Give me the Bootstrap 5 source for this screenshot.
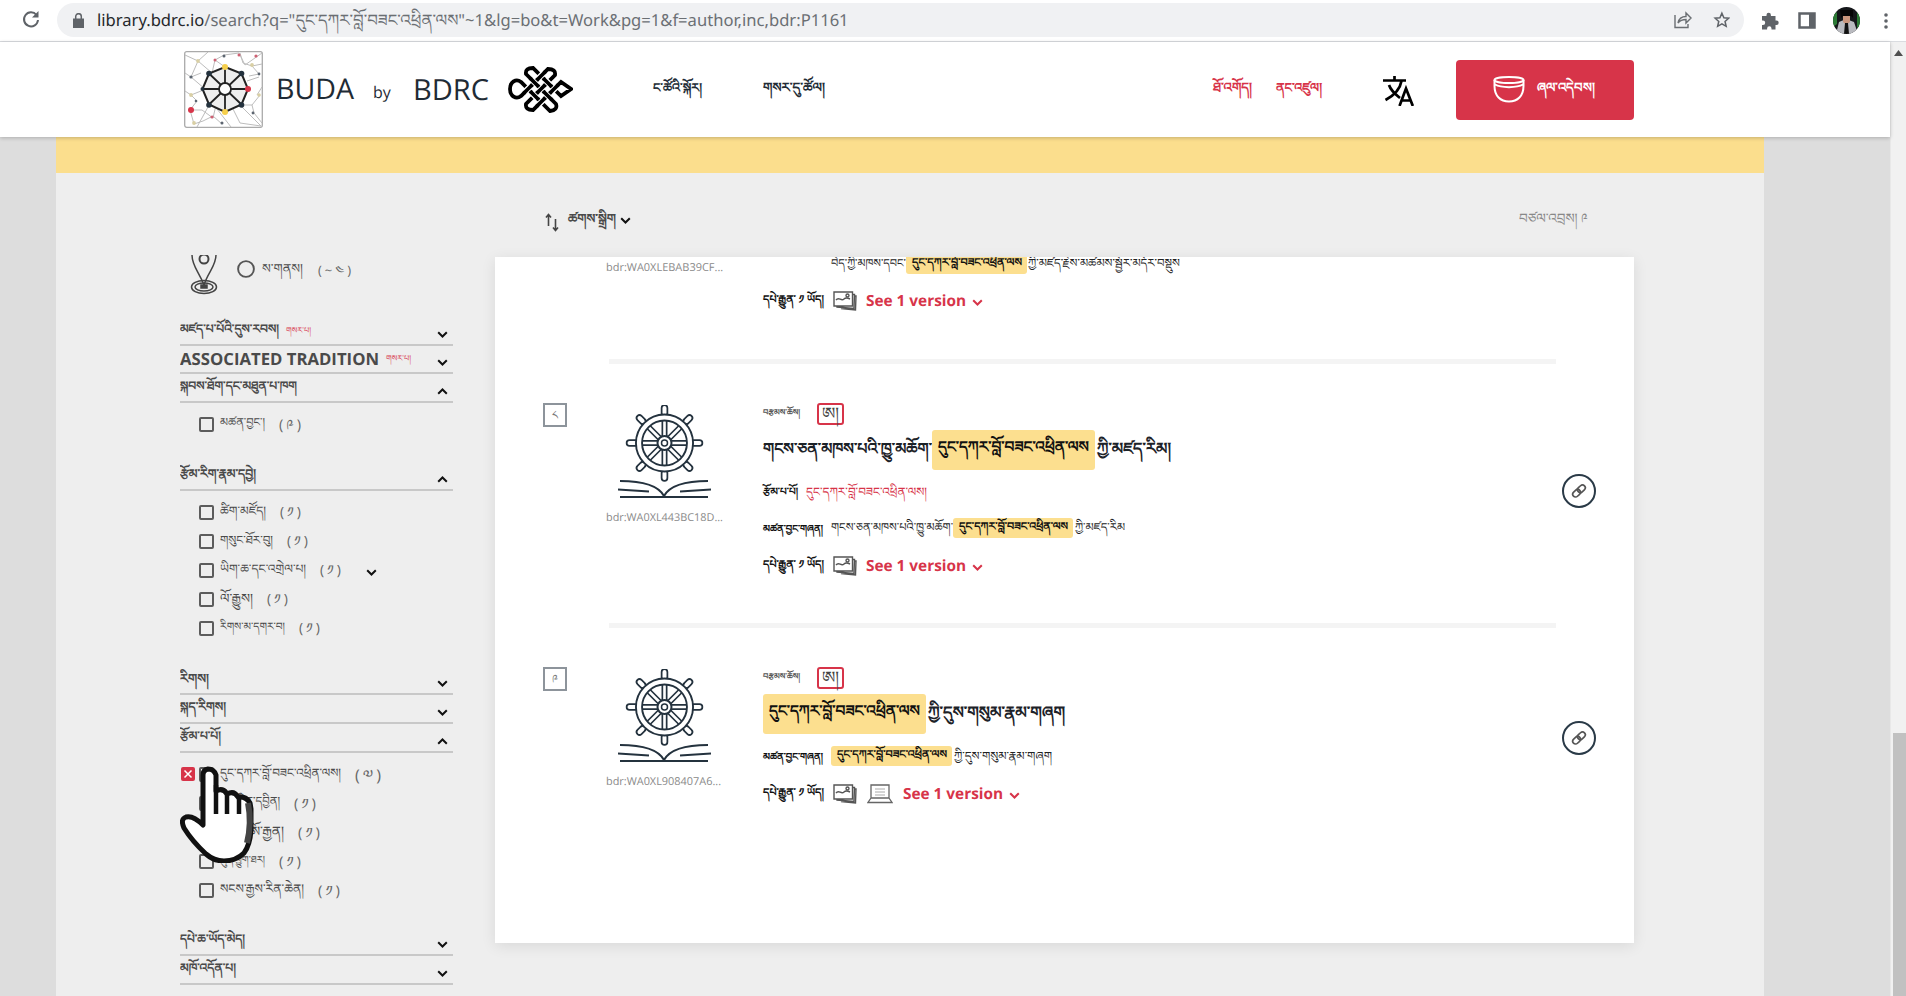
<!DOCTYPE html>
<html lang="bo">
<head>
<meta charset="utf-8">
<title>BUDA by BDRC</title>
<link rel="stylesheet" href="https://cdn.jsdelivr.net/npm/bootstrap@5.3.0/dist/css/bootstrap.min.css">
<style>
body{width:1906px;height:996px;overflow:hidden;background:#ddd;font-family:"Open Sans","Noto Sans",sans-serif;color:#4a4a4a;font-size:14px;line-height:20px;text-rendering:geometricPrecision}
[data-w]{white-space:nowrap;flex:none;display:inline-block}
svg{display:block;flex:none}
.chrome{height:42px;border-bottom:1px solid #dadce0;padding-left:21px}
.pill{width:1687px;height:34px;border-radius:17px;background:#f0f1f3;margin-left:17px;margin-top:-2px;padding:0 14px;font-family:"Noto Sans",sans-serif;font-size:17px;color:#6b6f73}
.pill b{font-weight:400;color:#25282b}
.viewport{height:954px}
.topbar{height:95px;box-shadow:0 1px 4px rgba(0,0,0,.22);z-index:2;padding-left:184px;color:#1f2b35}
.brand{font-size:28px;line-height:36px;margin-top:-2px}
.navtx{line-height:24px;color:#222c36;font-weight:600;margin-top:-5px}
.red{color:#d73449}
.donate{width:178px;height:60px;background:#d73449;border-radius:4px;color:#fff;font-weight:700;border:0}
.page{width:1708px;margin-left:56px;background:#eee;height:859px}
.strip{height:36px;background:#fbde8d}
.sidebar{width:273px;margin-left:124px;margin-top:82px;overflow:hidden;height:742px}
.place{height:62px;padding-left:10px}
.facet{height:29px;border-bottom:2px solid #c8c8c8;font-weight:700;font-size:15px;color:#4a4a4a;padding-right:5px}
.facet .bo{margin-top:-3px}
.facet svg,.exp{margin-top:7px}
.exp{margin-left:25px}
.facet.short{height:28px}
.opts{padding:7px 0 0 19px}
.opt{height:29px}
.opt .tick{width:15px;height:15px;border:2px solid #5c5c5c;border-radius:2px;margin-right:6px;flex:none}
.opt .bo{margin-top:-3px}
.cnt{margin-left:14px;color:#666;margin-top:1px;letter-spacing:3px}
.kill{left:-18px;top:7px;width:14px;height:14px;border-radius:2px;background:#d73449}
.results{width:1139px;margin-left:42px}
.sortbar{height:84px;padding:3px 48px 0 50px}
.panel{height:686px;background:#fff;box-shadow:0 3px 14px rgba(0,0,0,.09);overflow:hidden;padding-left:48px}
.item{height:264px;width:1070px}
.item.first{height:102px}
.rule{height:5px;background:#f4f4f4;margin-left:66px;width:947px;flex:none}
.num{width:24px;height:24px;border:2px solid #8d949b;margin-top:39px;color:#777;flex:none}
.num span{font-size:9px;line-height:12px}
.thumb{width:196px;padding-left:39px;flex:none}
.rid{font-size:11px;line-height:16px;color:#8a8a8a}
.line{height:36px;color:#222}
.line .bo{margin-top:-2px}
.last{margin-top:2px}
.line .pic{margin:0 9px}
.hl{background:#fcdf8f;border-radius:3px;color:#111;height:20px;font-weight:700;padding:0 5px 0 6px;display:flex;align-items:center;flex:none}
.hl.big{height:40px;padding:0 6px 4px}
.line.title{height:52px;color:#1c2228;font-weight:600}
.line.title>.bo{margin-top:-5px}
.lab{font-weight:700;color:#111}
.vers{font-weight:700;font-size:15.5px;color:#d73449}
.aa{width:27px;height:22px;border:2px solid #d73449;border-radius:3px;color:#444}
.lk{width:34px;height:34px;border:2px solid #2a3a47;border-radius:50%}
.scroller{width:16px;background:#f1f1f1;border-left:1px solid #e8e8e8}
.thumbbar{width:13px;height:263px;background:#c1c1c1}
</style>
</head>
<body>
<svg width="0" height="0" class="position-absolute">
<symbol id="dn" viewBox="0 0 11 7"><path d="M1.2 1.2 5.500 5.500 9.800 1.2" fill="none" stroke="currentColor" stroke-width="2"/></symbol>
<symbol id="up" viewBox="0 0 11 7"><path d="M1.2 5.800 5.500 1.5 9.800 5.800" fill="none" stroke="currentColor" stroke-width="2"/></symbol>
<symbol id="imgs" viewBox="0 0 24 20"><g fill="none" stroke="#555" stroke-width="1.4"><path d="M1 1h18.500v14H1zM19.500 3.500h2L21 17.500 4 16v-1M21.500 5h1.500l-.5 14L8 17.500"/><path d="M3 9c3-4 5 2 8-1 2-2 4-1 6 0"/><circle cx="14.500" cy="4.500" r="1.500"/></g></symbol>
<symbol id="lap" viewBox="0 0 26 20"><g fill="none" stroke="#666" stroke-width="1.300"><path d="M4 1h18v13H4zM4 14l-3 4.500h24l-3-4.500M1 18.500h24"/><path d="M8 5h10M8 8h10M8 11h10" stroke="#aaa" stroke-width="1"/></g></symbol>
<symbol id="link" viewBox="0 0 16 16"><g fill="none" stroke="#555" stroke-width="1.700" transform="rotate(-43 8 8)"><rect x="0.500" y="5.200" width="8.500" height="5.600" rx="2.800"/><rect x="7" y="5.200" width="8.500" height="5.600" rx="2.800"/></g></symbol>
<symbol id="wheel" viewBox="0 0 94 96">
<g stroke-linecap="round"><path d="M46.500 3v70M11.500 38h70M21.500 13l50 50M71.500 13l-50 50" stroke="#24323e" stroke-width="6"/><path d="M46.500 3v6M46.500 67v6M11.500 38h6M75.500 38h6M21.500 13l3.500 3.500M68 59.500l3.500 3.500M71.500 13l-3.500 3.500M25 59.500l-3.500 3.500" stroke="#24323e" stroke-width="7.500"/><path d="M46.500 3v70M11.500 38h70M21.500 13l50 50M71.500 13l-50 50" stroke="#fff" stroke-width="2.600"/><path d="M46.500 3v5M46.500 68v5M11.500 38h5M76.500 38h5M21.500 13l3 3M68.500 60l3 3M71.500 13l-3 3M24.500 60l-3 3" stroke="#fff" stroke-width="4"/></g>
<circle cx="46.500" cy="38" r="25.500" fill="none" stroke="#24323e" stroke-width="8"/><circle cx="46.500" cy="38" r="25.500" fill="none" stroke="#fff" stroke-width="4.200"/>
<circle cx="46.500" cy="38" r="7" fill="#fff" stroke="#24323e" stroke-width="2"/><circle cx="46.500" cy="38" r="3" fill="none" stroke="#24323e" stroke-width="1.500"/>
<g fill="none" stroke="#24323e" stroke-width="2"><path d="M2 76c22 0 38 4 44 15 6-11 22-15 44-15M0 84.500l31 2M93 84.500l-31 2M2 92h88"/></g>
</symbol>
</svg>

<header class="chrome bg-white d-flex align-items-center">
<svg width="19" height="20" viewBox="0 0 19 20" class="mb-1"><path d="M15.500 6A7 7 0 1 0 17 11" fill="none" stroke="#5f6368" stroke-width="2"/><path d="M17.500 2v6.500H11z" fill="#5f6368"/></svg>
<div class="pill d-flex align-items-center">
<svg width="11" height="15" viewBox="0 0 11 15" style="margin:1px 15px 0 2px"><path d="M0 5.500h11V15H0z" fill="#5f6368"/><path d="M2.700 6V3.500a2.800 2.800 0 0 1 5.600 0V6" fill="none" stroke="#5f6368" stroke-width="1.500"/></svg>
<span data-w="752" style="margin-left:-2px">​<b>library.bdrc.io</b>/search?q="དུང་དཀར་བློ་བཟང་འཕྲིན་ལས"~1&amp;lg=bo&amp;t=Work&amp;pg=1&amp;f=author,inc,bdr:P1161</span>
<svg class="ms-auto" width="18" height="18" viewBox="0 0 18 18" fill="none" stroke="#6a6e72" stroke-width="1.400"><path d="M1 4v12.500h13V13M4 12c1-5 4-6.500 8-6.500V2l5 5-5 5V8.500c-4 0-6 1-8 3.500z"/></svg>
<svg class="ms-3 ps-1" width="22" height="18" viewBox="-2 0 20 18"><path d="M9 1.500l2.200 5 5.300.5-4 3.600 1.200 5.400L9 13.200 4.300 16l1.200-5.400-4-3.600 5.300-.5z" fill="none" stroke="#5f6368" stroke-width="1.700"/></svg>
</div>
<svg style="margin-left:16px" width="20" height="20" viewBox="0 0 20 20"><path d="M2 5h4.500V4a2.200 2.200 0 0 1 4.400 0v1H15.500v4.500h1a2.200 2.200 0 0 1 0 4.400h-1V18.500H11.500v-1a2.200 2.200 0 0 0-4.400 0v1H2v-4.500h1a2.200 2.200 0 0 0 0-4.400H2z" fill="#5f6368"/></svg>
<svg style="margin-left:18px" width="18" height="17" viewBox="0 0 18 17"><path d="M1.500 1.500h15v14h-15z" fill="none" stroke="#5f6368" stroke-width="2.500"/><path d="M11 1h6v15h-6z" fill="#5f6368"/></svg>
<svg style="margin-left:17px" width="27" height="27" viewBox="0 0 27 27"><clipPath id="av"><circle cx="13.500" cy="13.500" r="13.500"/></clipPath><g clip-path="url(#av)"><path d="M0 0h27v27H0z" fill="#15171a"/><path d="M0 8l4-3v12l-4 3zM24 5l3 4v10l-3 2z" fill="#2b7a35"/><path d="M3 27l3-12 7-3 8 3 4 12z" fill="#b9babf"/><path d="M10 9h7v6l-3.500 3L10 15z" fill="#c9967d"/><path d="M7 3h13v8l-2-2h-8l-2 2z" fill="#060606"/><path d="M12 16h3l1 11h-5z" fill="#111"/></g></svg>
<svg style="margin-left:23px" width="6" height="18" viewBox="0 0 6 18" fill="#5f6368"><circle cx="3" cy="3" r="1.800"/><circle cx="3" cy="9" r="1.800"/><circle cx="3" cy="15" r="1.800"/></svg>
</header>

<div class="viewport d-flex">
<div class="flex-grow-1">
<nav class="topbar bg-white d-flex align-items-center position-relative">
<svg width="79" height="77" viewBox="0 0 79 77"><rect x=".7" y=".7" width="77.600" height="75.600" rx="2" fill="#fff" stroke="#aaa" stroke-width="1.300"/>
<g fill="none" stroke="#bdbdbd" stroke-width="1"><path d="M1 4l13 6 10-9M14 10L7 26 1 22M14 10l14 12 3-13 9-5M40 4l15-2 6 12 17-12M31 9l10 7M56 2l3 10 9 3 10-2M68 15l7 8-10 2M7 26l10-4M7 26l14 12M7 44l15-6M7 44l6 6-7 9 12 0M7 44L1 40M6 59l4 14 9-3 10-5 9 8M18 59l11 8 3-13M13 76l11-20M48 56l8 16 21 3M55 53l23 23M58 54l10 0 8-10M68 54l2 8 8 10M73 44l5-8M63 30l12-4M33 58l14 18"/></g>
<path d="M41 16l16.500 6.500L64 38l-6.500 15.500L41 61l-16-7.500L18.500 38 25 22.500z" fill="#eee" stroke="#222" stroke-width="2"/><path d="M41 16v45M18.500 38H64M25 22.500l32.500 31M57.500 22.500L25 53.500" stroke="#222" stroke-width="1.800"/><circle cx="41" cy="38" r="6" fill="#fff" stroke="#222" stroke-width="1.800"/>
<g fill="#24323e"><circle cx="25" cy="22.500" r="2.800"/><circle cx="57.500" cy="22.500" r="2.800"/><circle cx="25" cy="54" r="2.800"/><circle cx="57.500" cy="54" r="2.800"/><circle cx="18.500" cy="38" r="2"/></g><g fill="#5c6570"><circle cx="7" cy="26" r="1.600"/><circle cx="40" cy="5" r="1.500"/><circle cx="75" cy="23" r="1.400"/><circle cx="38" cy="72" r="1.500"/><circle cx="69" cy="62" r="1.400"/><circle cx="12" cy="50" r="1.300"/></g>
<g fill="#f5cf4c"><circle cx="41" cy="16" r="3"/><circle cx="41" cy="61" r="3"/></g><g fill="#d9cfa4"><circle cx="14" cy="10" r="1.900"/><circle cx="68" cy="14" r="1.900"/><circle cx="10" cy="72" r="1.900"/><circle cx="7" cy="44" r="1.900"/><circle cx="75" cy="44" r="1.800"/></g><g fill="#d73449"><circle cx="64" cy="38" r="3"/><circle cx="7" cy="59" r="3"/></g><g fill="#cf6173"><circle cx="31" cy="9" r="1.500"/><circle cx="55" cy="4" r="1.500"/><circle cx="72" cy="5" r="1.600"/><circle cx="28" cy="66" r="1.600"/></g></svg>
<span class="brand" data-w="78" style="margin-left:13px">BUDA</span><span data-w="20" class="fs-6" style="margin-left:19px;margin-top:5px">by</span><span class="brand" data-w="76" style="margin-left:20px">BDRC</span>
<svg style="margin-left:19px" width="65" height="48" viewBox="0 0 65 48" fill="none"><path d="M18 8L48 38q2 6-6 7L13 16C8 12 2 16 2 23s6 11 11 7L40 3q8 0 7 6L18 38q-1 6 7 6L53 16l10 7-10 7L25 2q-8 0-7 6z" stroke="#000" stroke-width="3.800"/><path d="M17 26l6-6M30 13l6-6M30 26l6-6M30 39l6-6M43 26l6-6M23.500 13.500l6 6M23.500 26.500l6 6M36.500 13.500l6 6M36.500 26.500l6 6" stroke="#fff" stroke-width="6.400"/><path d="M15.500 27.500l9-9M28.500 14.500l9-9M28.500 27.500l9-9M28.500 40.500l9-9M41.500 27.500l9-9M22 12l9 9M22 25l9 9M35 12l9 9M35 25l9 9" stroke="#000" stroke-width="3.800"/></svg>
<span class="navtx" data-w="49" style="margin-left:80px">ང་ཚོའི་སྐོར།</span><span class="navtx" data-w="62" style="margin-left:61px">གསར་དུ་ཚོལ།</span>
<span class="navtx red" data-w="39" style="margin-left:388px">ཐོ་འགོད།</span><span class="navtx red" data-w="46" style="margin-left:24px">ནང་འཛུལ།</span>
<svg style="margin-left:61px;margin-top:3px" width="31" height="30" viewBox="0 0 31 30" fill="none" stroke="#000" stroke-width="2.700"><path d="M0 4.500h23M11.500 0v4.500M18.500 5C17 14 10 20 2.500 24M6 9c2 6 6 9 11 13"/><path d="M16.500 30l6.500-17.500L29.800 30M18.500 24.500h9"/></svg>
<button class="donate d-flex align-items-center" style="margin-left:42px;padding-left:37px"><svg width="32" height="27" viewBox="0 0 32 27" fill="none" stroke="#fff" stroke-width="2"><ellipse cx="16" cy="4" rx="14.500" ry="3"/><path d="M1.500 4v6c0 10 6 15.500 14.500 15.500S30.500 20 30.500 10V4M2 8.500c6 3.500 22 3.500 28 0"/></svg><span data-w="59" style="margin-left:11px;margin-top:-6px">ཞལ་འདེབས།</span></button>
</nav>
<main class="page">
<div class="strip"></div>
<div class="d-flex">
<aside class="sidebar position-relative">
<div class="place d-flex">
<svg width="28" height="40" viewBox="0 0 28 40" fill="none" stroke="#444" stroke-width="1.500"><path d="M2 0c0 11 7 17 12 30C18 17 26 11 26 0"/><circle cx="14" cy="4" r="4.500" stroke-width="2"/><ellipse cx="14" cy="32" rx="12.500" ry="6.500"/><ellipse cx="14" cy="32" rx="9" ry="4"/><path d="M11 30h6v3h-6z" fill="#444"/></svg>
<svg style="margin:5px 0 0 19px" width="18" height="18" viewBox="0 0 18 18"><circle cx="9" cy="9" r="7.900" fill="none" stroke="#555" stroke-width="1.900"/></svg>
<span class="bo" data-w="41" style="margin:3px 0 0 7px">ས་གནས།</span><span class="cnt" data-w="36" style="margin-top:5px;margin-left:15px">(~༤)</span>
</div>
<div class="facet d-flex align-items-center"><span class="bo" data-w="99">མཛད་པ་པོའི་དུས་རབས།</span><span class="red fw-normal" style="margin-left:7px" data-w="25">གསར་པ།</span><svg class="ms-auto" width="11" height="7" color="#111"><use href="#dn"/></svg></div>
<div class="facet short d-flex align-items-center"><span data-w="199">ASSOCIATED TRADITION</span><span class="red fw-normal" style="margin-left:7px" data-w="25">གསར་པ།</span><svg class="ms-auto" width="11" height="7" color="#111"><use href="#dn"/></svg></div>
<div class="facet d-flex align-items-center"><span class="bo" data-w="117">སྐབས་ཐོག་དང་མཐུན་པ་ཁག</span><svg class="ms-auto" width="11" height="7" color="#111"><use href="#up"/></svg></div>
<div class="opts" style="height:59px"><div class="opt d-flex align-items-center"><i class="tick"></i><span class="bo" data-w="45">མཚན་བྱང་།</span><span class="cnt" data-w="25">(༩)</span></div></div>
<div class="facet d-flex align-items-center"><span class="bo" data-w="76">རྩོམ་རིག་རྣམ་དབྱེ།</span><svg class="ms-auto" width="11" height="7" color="#111"><use href="#up"/></svg></div>
<div class="opts" style="height:175px">
<div class="opt d-flex align-items-center"><i class="tick"></i><span class="bo" data-w="46">ཚིག་མཛོད།</span><span class="cnt" data-w="24">(༡)</span></div>
<div class="opt d-flex align-items-center"><i class="tick"></i><span class="bo" data-w="53">གསུང་ཐོར་བུ།</span><span class="cnt" data-w="24">(༡)</span></div>
<div class="opt d-flex align-items-center"><i class="tick"></i><span class="bo" data-w="86">ཡིག་ཆ་དང་འགྲེལ་པ།</span><span class="cnt" data-w="24">(༡)</span><svg class="exp mt-1" style="margin-left:22px" width="11" height="7" color="#111"><use href="#dn"/></svg></div>
<div class="opt d-flex align-items-center"><i class="tick"></i><span class="bo" data-w="33">ལོ་རྒྱུས།</span><span class="cnt" data-w="24">(༡)</span></div>
<div class="opt d-flex align-items-center"><i class="tick"></i><span class="bo" data-w="65">རིགས་མ་དགར་བ།</span><span class="cnt" data-w="24">(༡)</span></div>
</div>
<div class="facet d-flex align-items-center"><span class="bo" data-w="29">རིགས།</span><svg class="ms-auto" width="11" height="7" color="#111"><use href="#dn"/></svg></div>
<div class="facet d-flex align-items-center"><span class="bo" data-w="46">སྐད་རིགས།</span><svg class="ms-auto" width="11" height="7" color="#111"><use href="#dn"/></svg></div>
<div class="facet d-flex align-items-center"><span class="bo" data-w="41">རྩོམ་པ་པོ།</span><svg class="ms-auto" width="11" height="7" color="#111"><use href="#up"/></svg></div>
<div class="opts" style="height:174px">
<div class="opt d-flex align-items-center position-relative"><span class="kill position-absolute"><svg width="14" height="14" viewBox="0 0 14 14"><path d="M3.500 3.500l7 7M10.500 3.500l-7 7" stroke="#fff" stroke-width="1.500"/></svg></span><i class="tick"></i><span class="bo" data-w="121">དུང་དཀར་བློ་བཟང་འཕྲིན་ལས།</span><span class="cnt" data-w="29">(༧)</span></div>
<div class="opt d-flex align-items-center"><i class="tick"></i><span class="bo" data-w="60">དགེ་སྦྱིན་དབྱིན།</span><span class="cnt" data-w="25">(༡)</span></div>
<div class="opt d-flex align-items-center"><i class="tick"></i><span class="bo" data-w="64">དཔལ་ཨོ་རྒྱན།</span><span class="cnt" data-w="25">(༡)</span></div>
<div class="opt d-flex align-items-center"><i class="tick"></i><span class="bo" data-w="45">ཀུན་ཕྱུག་ཐར།</span><span class="cnt" data-w="25">(༡)</span></div>
<div class="opt d-flex align-items-center"><i class="tick"></i><span class="bo" data-w="84">སངས་རྒྱས་རིན་ཆེན།</span><span class="cnt" data-w="25">(༡)</span></div>
</div>
<div class="facet d-flex align-items-center"><span class="bo" data-w="65">དཔེ་ཆ་ཡོད་མེད།</span><svg class="ms-auto" width="11" height="7" color="#111"><use href="#dn"/></svg></div>
<div class="facet d-flex align-items-center"><span class="bo" data-w="56">མཁོ་འདོན་པ།</span><svg class="ms-auto" width="11" height="7" color="#111"><use href="#dn"/></svg></div>
<svg class="position-absolute" style="left:0;top:508px" width="76" height="100" viewBox="0 0 76 100"><path d="M23 12q0-5 5-6 6 0 8 6v16q7-4 11 3 7-4 11 3 8-1 12 6l1 6v21q-1 15-7 23-8 8-20 8-10 0-18-7Q12 78 4 65q-4-9 2-11 7-2 17 8z" fill="#fff" stroke="#111" stroke-width="5" stroke-linejoin="round"/><path d="M36 22v29M47 31v20M59 34v17" stroke="#111" stroke-width="4.500"/><path d="M68 40q4 20-1 40" stroke="#444" stroke-width="6" fill="none"/></svg>
</aside>

<section class="results">
<div class="sortbar d-flex align-items-center">
<svg width="14" height="19" viewBox="0 0 14 19" fill="none" stroke="#444" stroke-width="1.600" style="margin-top:11px"><path d="M3.500 13V2M1 4.500L3.500 1.500 6 4.500M10.500 6v11M8 14.500l2.500 3 2.500-3"/></svg>
<span data-w="48" class="fw-semibold" style="margin-left:9px;margin-top:2px">ཚགས་སྒྲིག</span><svg style="margin-left:4px;margin-top:8px" width="11" height="7" color="#111"><use href="#dn"/></svg>
<span data-w="69" class="ms-auto" style="color:#888;margin-top:2px;margin-right:-2px">བཙལ་འབྲས། ༩</span>
</div>
<div class="panel">
<div class="item first d-flex"><div style="width:24px"></div><div class="thumb"><div class="rid" style="margin-top:-1px" data-w="117">bdr:WA0XLEBAB39CF...</div></div>
<div><div class="line d-flex align-items-start" style="height:25px;padding-left:68px;margin-top:-3px"><span data-w="75">བེད་ཀྱི་མཁས་དབང་</span><span class="hl"><span class="bo" data-w="110">དུང་དཀར་བློ་བཟང་འཕྲིན་ལས</span></span><span data-w="152" style="margin-left:1px">ཀྱི་མཛད་རྗེས་མཚམས་སྦྱོར་མདོར་བསྡུས</span></div>
<div class="line d-flex align-items-center" style="height:44px"><span class="lab bo" data-w="61">དཔེ་རྒྱུན་ ༡ ཡོད།</span><svg class="pic" width="24" height="20"><use href="#imgs"/></svg><span class="vers" data-w="100">See 1 version</span><svg class="red" style="margin:3px 0 0 6px" width="11" height="7"><use href="#dn"/></svg></div></div></div>
<div class="rule"></div>
<div class="item d-flex" style="height:259px"><div class="num text-center"><span data-w="6">༨</span></div><div class="thumb" style="padding-top:41px"><svg width="94" height="96" style="margin:0 0 6px 12px"><use href="#wheel"/></svg><div class="rid" data-w="117">bdr:WA0XL443BC18D...</div></div>
<div class="flex-grow-1" style="padding-top:36px"><div class="line d-flex align-items-center" style="height:24px;padding-top:4px"><span class="bo" data-w="37" style="color:#555;font-weight:700">བརྩམས་ཆོས།</span><span class="aa d-flex align-items-center justify-content-center" style="margin-left:17px"><span data-w="17" style="margin-top:-3px">ཨ།</span></span></div>
<div class="line title d-flex align-items-center"><span class="bo" data-w="169">གངས་ཅན་མཁས་པའི་ཁྱུ་མཆོག་</span><span class="hl big ms-0"><span class="bo" data-w="151">དུང་དཀར་བློ་བཟང་འཕྲིན་ལས</span></span><span class="bo" style="margin-left:2px" data-w="74">ཀྱི་མཛད་རིམ།</span></div>
<div class="line d-flex align-items-center" style="margin-top:-2px"><span class="lab" data-w="35">རྩོམ་པ་པོ།</span><span class="red ms-2" data-w="121">དུང་དཀར་བློ་བཟང་འཕྲིན་ལས།</span></div>
<div class="line d-flex align-items-center"><span class="lab" data-w="60">མཚན་བྱང་གཞན།</span><span class="ms-2" data-w="122">གངས་ཅན་མཁས་པའི་ཁྱུ་མཆོག་</span><span class="hl"><span class="bo" data-w="109">དུང་དཀར་བློ་བཟང་འཕྲིན་ལས</span></span><span style="margin-left:2px" data-w="50">ཀྱི་མཛད་རིམ</span></div>
<div class="line last d-flex align-items-center"><span class="lab bo" data-w="61">དཔེ་རྒྱུན་ ༡ ཡོད།</span><svg class="pic" width="24" height="20"><use href="#imgs"/></svg><span class="vers" data-w="100">See 1 version</span><svg class="red" style="margin:3px 0 0 6px" width="11" height="7"><use href="#dn"/></svg></div></div>
<div style="padding-top:110px;margin-right:17px"><div class="lk d-flex align-items-center justify-content-center"><svg width="16" height="16"><use href="#link"/></svg></div></div></div>
<div class="rule"></div>
<div class="item d-flex" style="height:259px"><div class="num text-center"><span data-w="6">༩</span></div><div class="thumb" style="padding-top:41px"><svg width="94" height="96" style="margin:0 0 6px 12px"><use href="#wheel"/></svg><div class="rid" data-w="115">bdr:WA0XL908407A6...</div></div>
<div class="flex-grow-1" style="padding-top:36px"><div class="line d-flex align-items-center" style="height:24px;padding-top:4px"><span class="bo" data-w="37" style="color:#555;font-weight:700">བརྩམས་ཆོས།</span><span class="aa d-flex align-items-center justify-content-center" style="margin-left:17px"><span data-w="17" style="margin-top:-3px">ཨ།</span></span></div>
<div class="line title d-flex align-items-center"><span class="hl big"><span class="bo" data-w="151">དུང་དཀར་བློ་བཟང་འཕྲིན་ལས</span></span><span class="bo" style="margin-left:2px" data-w="137">ཀྱི་དུས་གསུམ་རྣམ་གཞག</span></div>
<div class="line d-flex align-items-center" style="margin-top:-2px"><span class="lab" data-w="60">མཚན་བྱང་གཞན།</span><span class="hl ms-2"><span class="bo" data-w="110">དུང་དཀར་བློ་བཟང་འཕྲིན་ལས</span></span><span style="margin-left:2px" data-w="98">ཀྱི་དུས་གསུམ་རྣམ་གཞག</span></div>
<div class="line last d-flex align-items-center"><span class="lab bo" data-w="61">དཔེ་རྒྱུན་ ༡ ཡོད།</span><svg class="pic" width="24" height="20"><use href="#imgs"/></svg><svg style="margin:0 10px 0 1px" width="26" height="20"><use href="#lap"/></svg><span class="vers" data-w="100">See 1 version</span><svg class="red" style="margin:3px 0 0 6px" width="11" height="7"><use href="#dn"/></svg></div></div>
<div style="padding-top:93px;margin-right:17px"><div class="lk d-flex align-items-center justify-content-center"><svg width="16" height="16"><use href="#link"/></svg></div></div></div>
</div>
</section>
</div>
</main>
</div>
<div class="scroller d-flex flex-column align-items-end"><svg class="mx-auto" style="margin-top:8px" width="9" height="6"><path d="M0 6L4.500 0 9 6z" fill="#505050"/></svg><div class="thumbbar mt-auto"></div></div>
</div>
<script src="https://cdn.jsdelivr.net/npm/bootstrap@5.3.0/dist/js/bootstrap.bundle.min.js"></script>
<script>
document.querySelectorAll('[data-w]').forEach(function(el){
  var want=+el.dataset.w;
  for(var i=0;i<4;i++){
    var size=parseFloat(getComputedStyle(el).fontSize);
    el.style.fontSize=(size*want/el.getBoundingClientRect().width)+'px';
  }
  el.style.width=want+'px';
});
</script>
</body>
</html>
